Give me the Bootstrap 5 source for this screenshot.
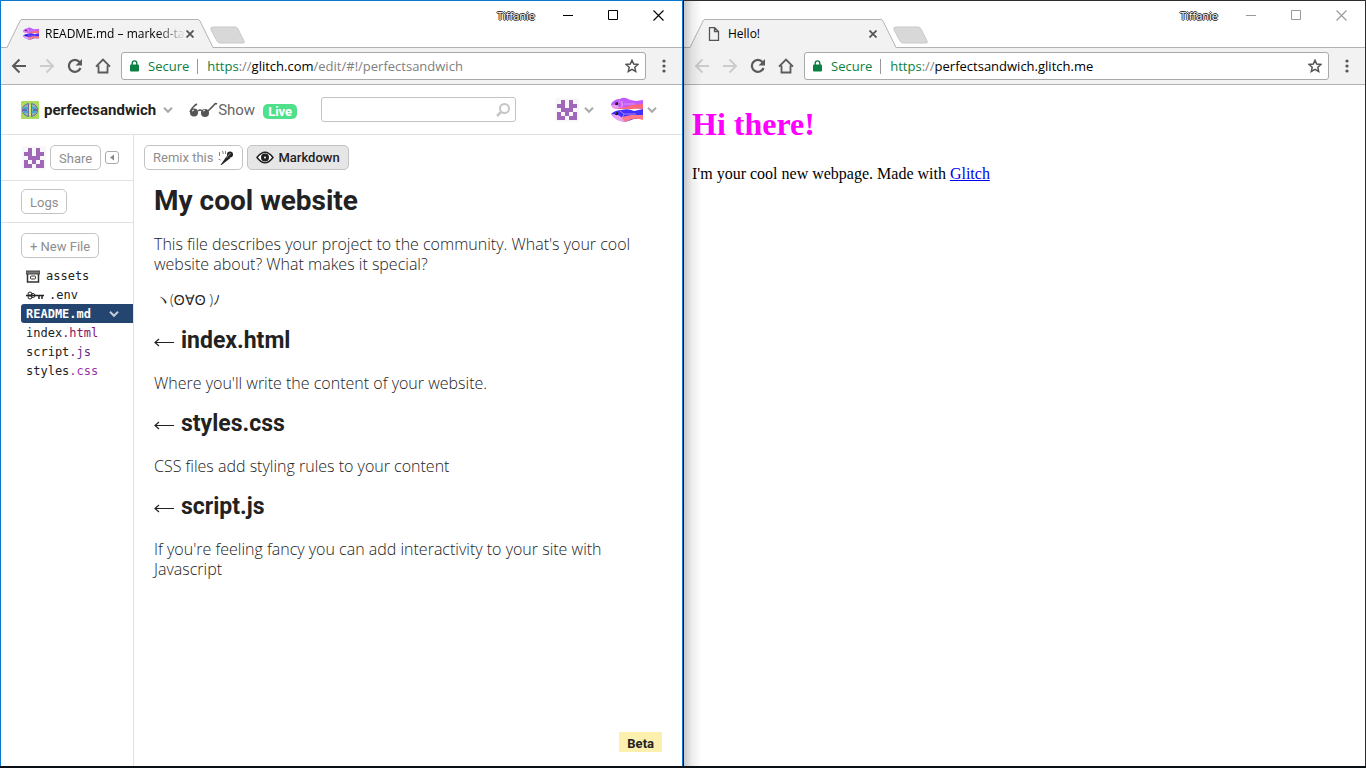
<!DOCTYPE html>
<html lang="en">
<head>
<meta charset="utf-8">
<meta name="viewport" content="width=device-width, initial-scale=1">
<title>Desktop</title>
<link href="https://cdn.jsdelivr.net/npm/bootstrap@5.3.0/dist/css/bootstrap.min.css" rel="stylesheet">
<style>
  body { background: #0b0f16; font-family: "Open Sans", "Noto Sans", sans-serif; color: #222; overflow: hidden; }
  svg { display: block; flex: none; }
  .desk { padding-bottom: 2px; }
  .win { flex: 1 1 0; min-width: 0; background: #fff; border: 1px solid #0b78d0; border-bottom: 0; }
  .win-active { margin-right: 1px; }
  .win-back { border-color: #2d2c31; border-left: 0; }
  .win-back::before { content: ""; position: absolute; inset: 0 auto 0 0; width: 18px; background: linear-gradient(90deg, rgba(0,0,0,.22), rgba(0,0,0,.07) 45%, rgba(0,0,0,0)); pointer-events: none; z-index: 5; }

  /* browser frame */
  .frame-top { height: 47px; border-bottom: 1px solid #b3b3b3; }
  .tab { width: 206px; height: 29px; margin: 18px 0 0 6px; padding: 0 19px 0 16px; font-size: 12px; color: #000; }
  .tab > * { position: relative; }
  .tab > .tab-shape { position: absolute; left: 0; top: 0; }
  .tab-title { flex: 1; white-space: nowrap; line-height: 18px; padding-left: 6px; }
  .fade-end { -webkit-mask-image: linear-gradient(90deg, #000 80%, transparent); mask-image: linear-gradient(90deg, #000 80%, transparent); }
  .plain { background: none; border: 0; padding: 0; }
  .plus-tab { margin: 25px 0 0 -3px; }
  .who { font: 11px/16px "Open Sans", sans-serif; color: #fff; text-shadow: 1px 0 #222, -1px 0 #222, 0 1px #222, 0 -1px #222; margin: 7px 28px 0 auto; }
  .caption-btns { margin-top: 9px; gap: 34px; padding-right: 18px; color: #000; }
  .win-back .caption-btns { color: #999; }
  .bar { height: 37px; background: #f2f2f2; border-bottom: 1px solid #b3b3b3; padding: 0 16px 0 10px; color: #5a5a5a; }
  .nav-icons { gap: 12px; }
  .off { color: #ccc; }
  .omni { height: 28px; background: #fff; border: 1px solid #a9a9a9; border-radius: 3px; padding: 0 6px 0 8px; margin: 0 16px 0 10px; font-size: 13px; line-height: 20px; white-space: nowrap; }
  .secure { color: #0b8043; margin: 0 9px 0 9px; padding-right: 9px; position: relative; }
  .secure::after { content: ""; position: absolute; right: 0; top: 3px; bottom: 2px; width: 1px; background: #999; }
  .url { flex: 1; color: #808080; }
  .url b { font-weight: 400; color: #000; }
  .url i { font-style: normal; color: #0b8043; }

  /* editor */
  .app { font-family: Roboto, "Liberation Sans", sans-serif; }
  .app-head { height: 50px; border-bottom: 1px solid #e2e2e2; padding: 0 25px 0 20px; }
  .project { font-size: 15px; line-height: 20px; font-weight: 700; margin: 0 7px 0 5px; color: #222; text-decoration: none; }
  .show-link { font-size: 15px; line-height: 20px; color: #666; text-decoration: none; margin-left: 16px; }
  .live { background: #4fe08b; color: #fff; font-size: 13px; line-height: 15px; font-weight: 700; border-radius: 5px; padding: 0 5px; margin: 3px 0 0 8px; height: 15px; }
  .find { width: 195px; margin-left: 24px; position: relative; }
  .find input { height: 25px; border: 1px solid #c3c3c3; border-radius: 3px; padding: 0 28px 0 8px; font-size: 14px; width: 100%; display: block; }
  .find svg { position: absolute; right: 5px; top: 5px; }
  .account { color: #aaa; }
  .side { width: 133px; border-right: 1px solid #e2e2e2; flex: none; }
  .side-row { border-bottom: 1px solid #e2e2e2; padding-left: 20px; }
  .row-team { height: 46px; gap: 4px; padding-left: 21px; }
  .row-logs { height: 42px; }
  .pill { height: 25px; border: 1px solid #c3c3c3; border-radius: 5px; background: #fff; color: #8e8e8e; font-size: 13px; line-height: 25px; font-weight: 400; padding: 0 8px; white-space: nowrap; }
  .pill-on { background: #e6e6e6; color: #222; font-weight: 500; }
  .new-file { margin: 10px 0 0 20px; }
  .fold { width: 14px; height: 13px; border: 1px solid #aaa; border-radius: 3px; background: #fff; padding: 0; }
  .files { font-family: "DejaVu Sans Mono", "Liberation Mono", monospace; font-size: 12px; line-height: 19px; margin: 8px 0 0 20px; padding: 0; }
  .files a { display: flex; align-items: center; height: 19px; padding: 1px 0 0 5px; color: #222; text-decoration: none; }
  .files .picked { background: #24456f; color: #fff; font-weight: 700; border-radius: 3px 0 0 3px; padding-right: 14px; justify-content: space-between; }
  .files a svg + span { padding-left: 6px; }
  .ext-html { color: #8a1266; }
  .ext-js { color: #5b2f86; }
  .ext-css { color: #9436a6; }
  .doc { padding: 10px 20px 0 10px; }
  .prose { padding: 13px 0 0 10px; font-family: "Open Sans", Roboto, sans-serif; font-size: 16px; line-height: 20px; font-weight: 300; }
  .prose h1, .prose h2 { font-family: Roboto, sans-serif; font-weight: 700; }
  .prose h1 { font-size: 28px; line-height: 36px; margin: 0 0 15px; }
  .prose p { margin: 0 0 16px; }
  .prose .kao { font-size: 14px; padding-left: 2px; }
  .prose h2 { font-size: 23px; line-height: 30px; margin: 0 0 17px; display: flex; align-items: center; gap: 7px; }
  .prose h2 svg { margin-top: 2px; }
  .beta { background: #fcf0ae; font-size: 13px; line-height: 21px; height: 20px; padding: 1px 8px; font-weight: 700; color: #222; text-decoration: none; margin: auto 0 14px auto; }

  /* published page */
  .site { font-family: "Liberation Serif", serif; color: #000; padding: 21px 8px; }
  .site h1 { font-size: 32px; line-height: 37px; font-weight: 700; color: #f0f; margin: 0 0 22px; }
  .site p { font-size: 16px; line-height: 18px; margin: 0; }
  .site a { color: #00e; }
</style>
</head>
<body>
<svg width="0" height="0" class="position-absolute" aria-hidden="true">
  <symbol id="tabshape" viewBox="0 0 206 29"><path d="M0 28.500 13 2Q13.500 .5 15 .5H191Q192 .5 193 2L206 28.500V29H0z" fill="#f2f2f2"/><path d="M0 28.500 13 2Q13.500 .5 15 .5H191Q192 .5 193 2L206 28.500" fill="none" stroke="#b3b3b3"/></symbol>
  <symbol id="newtab" viewBox="0 0 36 19"><path d="M3 1H25Q27 1 28 3L34 15Q35 17 33 17H10Q8 17 7 15L1 4Q0 1 3 1z" fill="#d8d8d8" stroke="#c9c9c9"/></symbol>
  <symbol id="cross" viewBox="0 0 8 8"><path d="M.5.5l7 7m0-7l-7 7" stroke="#555" stroke-width="1.800"/></symbol>
  <symbol id="min" viewBox="0 0 11 11"><path d="M0 5.500h10" stroke="currentColor"/></symbol>
  <symbol id="max" viewBox="0 0 11 11"><path d="M.5.5h9v9h-9z" fill="none" stroke="currentColor"/></symbol>
  <symbol id="close" viewBox="0 0 11 11"><path d="M.5.5l10 10m0-10l-10 10" stroke="currentColor" stroke-width="1.100"/></symbol>
  <symbol id="back" viewBox="0 0 16 16"><path d="M15 8H2.500M8.500 1.500L2 8l6.500 6.500" fill="none" stroke="currentColor" stroke-width="2"/></symbol>
  <symbol id="fwd" viewBox="0 0 16 16"><path d="M1 8h12.500M7.500 1.500L14 8l-6.500 6.500" fill="none" stroke="currentColor" stroke-width="2"/></symbol>
  <symbol id="reload" viewBox="0 0 16 16"><path d="M13.500 10A6 6 0 1 1 12.500 4L14 5.500" fill="none" stroke="currentColor" stroke-width="2.200"/><path d="M15 1v6.500H8.500z" fill="currentColor"/></symbol>
  <symbol id="home" viewBox="0 0 16 16"><path d="M1 8.700L8 1.500l7 7.200M3.500 7.500V14.500h9V7.500M8 9.500" fill="none" stroke="currentColor" stroke-width="1.800"/></symbol>
  <symbol id="lock" viewBox="0 0 9 12"><path d="M2.200 5V3.200a2.300 2.300 0 0 1 4.600 0V5" fill="none" stroke="#0b8043" stroke-width="1.400"/><rect y="4.500" width="9" height="7" rx="1" fill="#0b8043"/></symbol>
  <symbol id="star" viewBox="0 0 14 14"><path d="M7 1.200l1.700 3.900 4.300.4-3.200 2.800.9 4.200L7 10.300l-3.700 2.200.9-4.200L1 5.500l4.300-.4z" fill="none" stroke="#555" stroke-width="1.500"/></symbol>
  <symbol id="dots" viewBox="0 0 4 14"><circle cx="2" cy="2" r="1.600" fill="#555"/><circle cx="2" cy="7" r="1.600" fill="#555"/><circle cx="2" cy="12" r="1.600" fill="#555"/></symbol>
  <symbol id="chev" viewBox="0 0 10 8"><path d="M1 1.800L5 5.800 9 1.800" fill="none" stroke="currentColor" stroke-width="2"/></symbol>
  <symbol id="fish" viewBox="0 0 32 25">
    <path d="M0 7Q3 2 9 2Q11 0 15 1Q20 4 25 4L32 3V12Q27 12 22 11Q8 14 1 10z" fill="#c25bff"/>
    <path d="M5 11Q14 11 21 8L32 7V12Q27 11 22 12L9 12z" fill="#ff6876"/><path d="M1 8Q6 6 9 11L4 12Q1 11 1 8z" fill="#ec9aee"/>
    <path d="M0 17Q4 13 11 13Q17 11 23 14L32 12V22Q28 22 23 22L14 25Q4 23 0 17z" fill="#402fff"/>
    <path d="M7 21Q15 19 20 18L32 18V23Q26 21 21 22L14 25z" fill="#ff7a86"/><path d="M0 17Q6 17 9 19L14 25Q4 24 0 17z" fill="#e9a0f2"/>
    <path d="M8 4L12 7 10 11M11 4V10M13 7H24M9 14L13 17 11 21M13 17H25" fill="none" stroke="#f7b7ef" stroke-width=".6"/>
    <circle cx="5.500" cy="6.500" r="1.500"/><circle cx="5.500" cy="16.500" r="1.500"/><circle cx="5" cy="6" r=".5" fill="#fff"/><circle cx="5" cy="16" r=".5" fill="#fff"/>
  </symbol>
  <symbol id="avatar" viewBox="0 0 24 24"><rect width="24" height="24" rx="2" fill="#f7f6f8"/><path d="M6 2h4v8h4V2h4v4h4v4h-4v4H6v-4H2V6h4zM2 14h4v4h4v4H2zM18 14h4v8h-8v-4h4zM10 14h4v4h-4z" fill="#a066b8"/></symbol>
  <symbol id="arrow" viewBox="0 0 20 9"><path d="M20 4.500H1M5 1L1 4.500 5 8" fill="none" stroke="#222" stroke-width="1.200"/></symbol>
</svg>

<div class="desk d-flex vh-100">

  <section class="win win-active d-flex flex-column">
    <div class="frame-top d-flex align-items-start">
      <div class="tab d-flex align-items-center position-relative">
        <svg class="tab-shape" width="206" height="29"><use href="#tabshape"/></svg>
        <svg width="16" height="13"><use href="#fish"/></svg>
        <span class="tab-title fade-end">README.md – marked-ta</span>
        <button class="plain" aria-label="Close tab"><svg width="8" height="8"><use href="#cross"/></svg></button>
      </div>
      <button class="plain plus-tab" aria-label="New tab"><svg width="36" height="19"><use href="#newtab"/></svg></button>
      <span class="who">Tiffanie</span>
      <div class="caption-btns d-flex">
        <button class="plain text-reset" aria-label="Minimize"><svg width="11" height="11"><use href="#min"/></svg></button>
        <button class="plain text-reset" aria-label="Maximize"><svg width="11" height="11"><use href="#max"/></svg></button>
        <button class="plain text-reset" aria-label="Close"><svg width="11" height="11"><use href="#close"/></svg></button>
      </div>
    </div>
    <div class="bar d-flex align-items-center">
      <div class="nav-icons d-flex">
        <button class="plain text-reset" aria-label="Back"><svg width="16" height="16"><use href="#back"/></svg></button>
        <button class="plain off" aria-label="Forward"><svg width="16" height="16"><use href="#fwd"/></svg></button>
        <button class="plain text-reset" aria-label="Reload"><svg width="16" height="16"><use href="#reload"/></svg></button>
        <button class="plain text-reset" aria-label="Home"><svg width="16" height="16"><use href="#home"/></svg></button>
      </div>
      <div class="omni d-flex align-items-center flex-grow-1">
        <svg width="9" height="12"><use href="#lock"/></svg>
        <span class="secure">Secure</span>
        <span class="url"><i>https</i>://<b>glitch.com</b>/edit/#!/perfectsandwich</span>
        <button class="plain" aria-label="Bookmark"><svg width="14" height="14"><use href="#star"/></svg></button>
      </div>
      <button class="plain" aria-label="Menu"><svg width="4" height="14"><use href="#dots"/></svg></button>
    </div>

    <div class="app d-flex flex-column flex-grow-1">
      <header class="app-head d-flex align-items-center">
        <svg width="18" height="18" viewBox="0 0 18 18"><rect width="18" height="18" rx="1" fill="#a9dc5b"/><path d="M7.500 2.500v13Q1.500 14 1.500 9T7.500 2.500zM10.500 2.500v13Q16.500 14 16.500 9T10.500 2.500z" fill="#8fb8b4" stroke="#7c62a6"/><path d="M3 7h4M3 11h4M11 7h4M11 11h4" stroke="#2aa6d8" stroke-width="1.500"/><path d="M2 9h4M12 9h4" stroke="#4f55a8" stroke-width="1.500"/><path d="M8 3.500h2v11H8z" fill="#c4f06a"/></svg>
        <a href="#" class="project">perfectsandwich</a>
        <svg width="10" height="8" color="#aaa"><use href="#chev"/></svg>
        <a href="#" class="show-link d-flex align-items-center">
          <svg width="29" height="16" viewBox="0 0 29 16"><circle cx="5" cy="10.500" r="4" fill="#555"/><circle cx="16" cy="11" r="4" fill="#555"/><path d="M1 10Q4 4 8 2M9 9Q11 7 13 9M19 9L25 3Q26 1 28 2" fill="none" stroke="#555" stroke-width="1.600"/><path d="M3 9l2-1M14 9l2-1" stroke="#fff"/></svg>Show</a>
        <span class="live">Live</span>
        <div class="find">
          <input type="search" aria-label="Search">
          <svg width="16" height="16" viewBox="0 0 16 16"><circle cx="9.500" cy="6.500" r="4.500" fill="none" stroke="#c6c6c6" stroke-width="2"/><path d="M6 10l-4 4" stroke="#c6c6c6" stroke-width="2.500"/></svg>
        </div>
        <div class="account d-flex align-items-center ms-auto">
          <svg width="24" height="24"><use href="#avatar"/></svg>
          <svg class="ms-1 me-3" width="12" height="8"><use href="#chev"/></svg>
          <svg width="32" height="25"><use href="#fish"/></svg>
          <svg class="ms-1" width="10" height="8"><use href="#chev"/></svg>
        </div>
      </header>

      <div class="d-flex flex-grow-1">
        <nav class="side">
          <div class="side-row row-team d-flex align-items-center">
            <svg width="24" height="24"><use href="#avatar"/></svg>
            <button class="pill">Share</button>
            <button class="fold" aria-label="Collapse"><svg width="12" height="11" viewBox="0 0 12 11"><path d="M8 2.500v6L4 5.500z" fill="#888"/></svg></button>
          </div>
          <div class="side-row row-logs d-flex align-items-center"><button class="pill">Logs</button></div>
          <button class="pill new-file d-block">+ New File</button>
          <div class="files">
            <a href="#"><svg width="14" height="13" viewBox="0 0 14 13"><path d="M0 2h14M1.500 4v8h11V4" fill="none" stroke="#333" stroke-width="1.500"/><path d="M0 1h14v3H0z" fill="#777" stroke="#444"/><rect x="4.500" y="6" width="5" height="3" rx="1" fill="none" stroke="#333"/></svg><span>assets</span></a>
            <a href="#"><svg class="me-1" width="19" height="9" viewBox="0 0 19 9"><circle cx="4" cy="3" r="2" fill="none" stroke="#222"/><circle cx="4" cy="6" r="2" fill="none" stroke="#222"/><circle cx="7" cy="4.500" r="2" fill="none" stroke="#222"/><path d="M0 4.500H18M13 5v3M16 5v3" stroke="#222" stroke-width="1.500"/></svg>.env</a>
            <a href="#" class="picked">README.md <svg width="10" height="8" color="#c4cddb"><use href="#chev"/></svg></a>
            <a href="#">index<b class="ext-html fw-normal">.html</b></a>
            <a href="#">script<b class="ext-js fw-normal">.js</b></a>
            <a href="#">styles<b class="ext-css fw-normal">.css</b></a>
          </div>
        </nav>

        <main class="doc d-flex flex-column flex-grow-1">
          <div class="d-flex">
            <button class="pill d-flex align-items-center">Remix this
              <svg class="ms-1" width="17" height="16" viewBox="0 0 16 16"><path d="M3 15L10 5 13 8 4 15z" fill="#222"/><circle cx="12.500" cy="4.500" r="3" fill="#222"/><path d="M2 2v4M5 1l1 3M1 9l2 1M8 1v3" stroke="#888"/><path d="M9 8L13 3" stroke="#888"/></svg></button>
            <button class="pill pill-on d-flex align-items-center ms-1">
              <svg class="me-1" width="18" height="13" viewBox="0 0 18 13"><path d="M1 6.500Q9-4 17 6.500Q9 17 1 6.500z" fill="#fff" stroke="#222" stroke-width="1.500"/><circle cx="9" cy="6.500" r="4" fill="#222"/><circle cx="9" cy="6.500" r="1" fill="#fff"/></svg>Markdown</button>
          </div>
          <article class="prose">
            <h1>My cool website</h1>
            <p>This file describes your project to the community. What's your cool website about? What makes it special?</p>
            <p class="kao">ヽ(ʘ∀ʘ )ﾉ</p>
            <h2><svg width="20" height="9"><use href="#arrow"/></svg>index.html</h2>
            <p>Where you'll write the content of your website.</p>
            <h2><svg width="20" height="9"><use href="#arrow"/></svg>styles.css</h2>
            <p>CSS files add styling rules to your content</p>
            <h2><svg width="20" height="9"><use href="#arrow"/></svg>script.js</h2>
            <p>If you're feeling fancy you can add interactivity to your site with Javascript</p>
          </article>
          <a href="#" class="beta">Beta</a>
        </main>
      </div>
    </div>
  </section>

  <section class="win win-back d-flex flex-column position-relative">
    <div class="frame-top d-flex align-items-start">
      <div class="tab d-flex align-items-center position-relative">
        <svg class="tab-shape" width="206" height="29"><use href="#tabshape"/></svg>
        <svg width="16" height="14" viewBox="0 0 16 14"><path d="M3.500.5h5l4 4v9h-9zM8.500.5v4h4" fill="none" stroke="#555" stroke-width="1.300"/></svg>
        <span class="tab-title">Hello!</span>
        <button class="plain" aria-label="Close tab"><svg width="8" height="8"><use href="#cross"/></svg></button>
      </div>
      <button class="plain plus-tab" aria-label="New tab"><svg width="36" height="19"><use href="#newtab"/></svg></button>
      <span class="who">Tiffanie</span>
      <div class="caption-btns d-flex">
        <button class="plain text-reset" aria-label="Minimize"><svg width="11" height="11"><use href="#min"/></svg></button>
        <button class="plain text-reset" aria-label="Maximize"><svg width="11" height="11"><use href="#max"/></svg></button>
        <button class="plain text-reset" aria-label="Close"><svg width="11" height="11"><use href="#close"/></svg></button>
      </div>
    </div>
    <div class="bar d-flex align-items-center">
      <div class="nav-icons d-flex">
        <button class="plain off" aria-label="Back"><svg width="16" height="16"><use href="#back"/></svg></button>
        <button class="plain off" aria-label="Forward"><svg width="16" height="16"><use href="#fwd"/></svg></button>
        <button class="plain text-reset" aria-label="Reload"><svg width="16" height="16"><use href="#reload"/></svg></button>
        <button class="plain text-reset" aria-label="Home"><svg width="16" height="16"><use href="#home"/></svg></button>
      </div>
      <div class="omni d-flex align-items-center flex-grow-1">
        <svg width="9" height="12"><use href="#lock"/></svg>
        <span class="secure">Secure</span>
        <span class="url"><i>https</i>://<b>perfectsandwich.glitch.me</b></span>
        <button class="plain" aria-label="Bookmark"><svg width="14" height="14"><use href="#star"/></svg></button>
      </div>
      <button class="plain" aria-label="Menu"><svg width="4" height="14"><use href="#dots"/></svg></button>
    </div>
    <main class="site flex-grow-1">
      <h1>Hi there!</h1>
      <p>I'm your cool new webpage. Made with <a href="#">Glitch</a></p>
    </main>
  </section>
</div>
<script src="https://cdn.jsdelivr.net/npm/bootstrap@5.3.0/dist/js/bootstrap.bundle.min.js"></script>
</body>
</html>
